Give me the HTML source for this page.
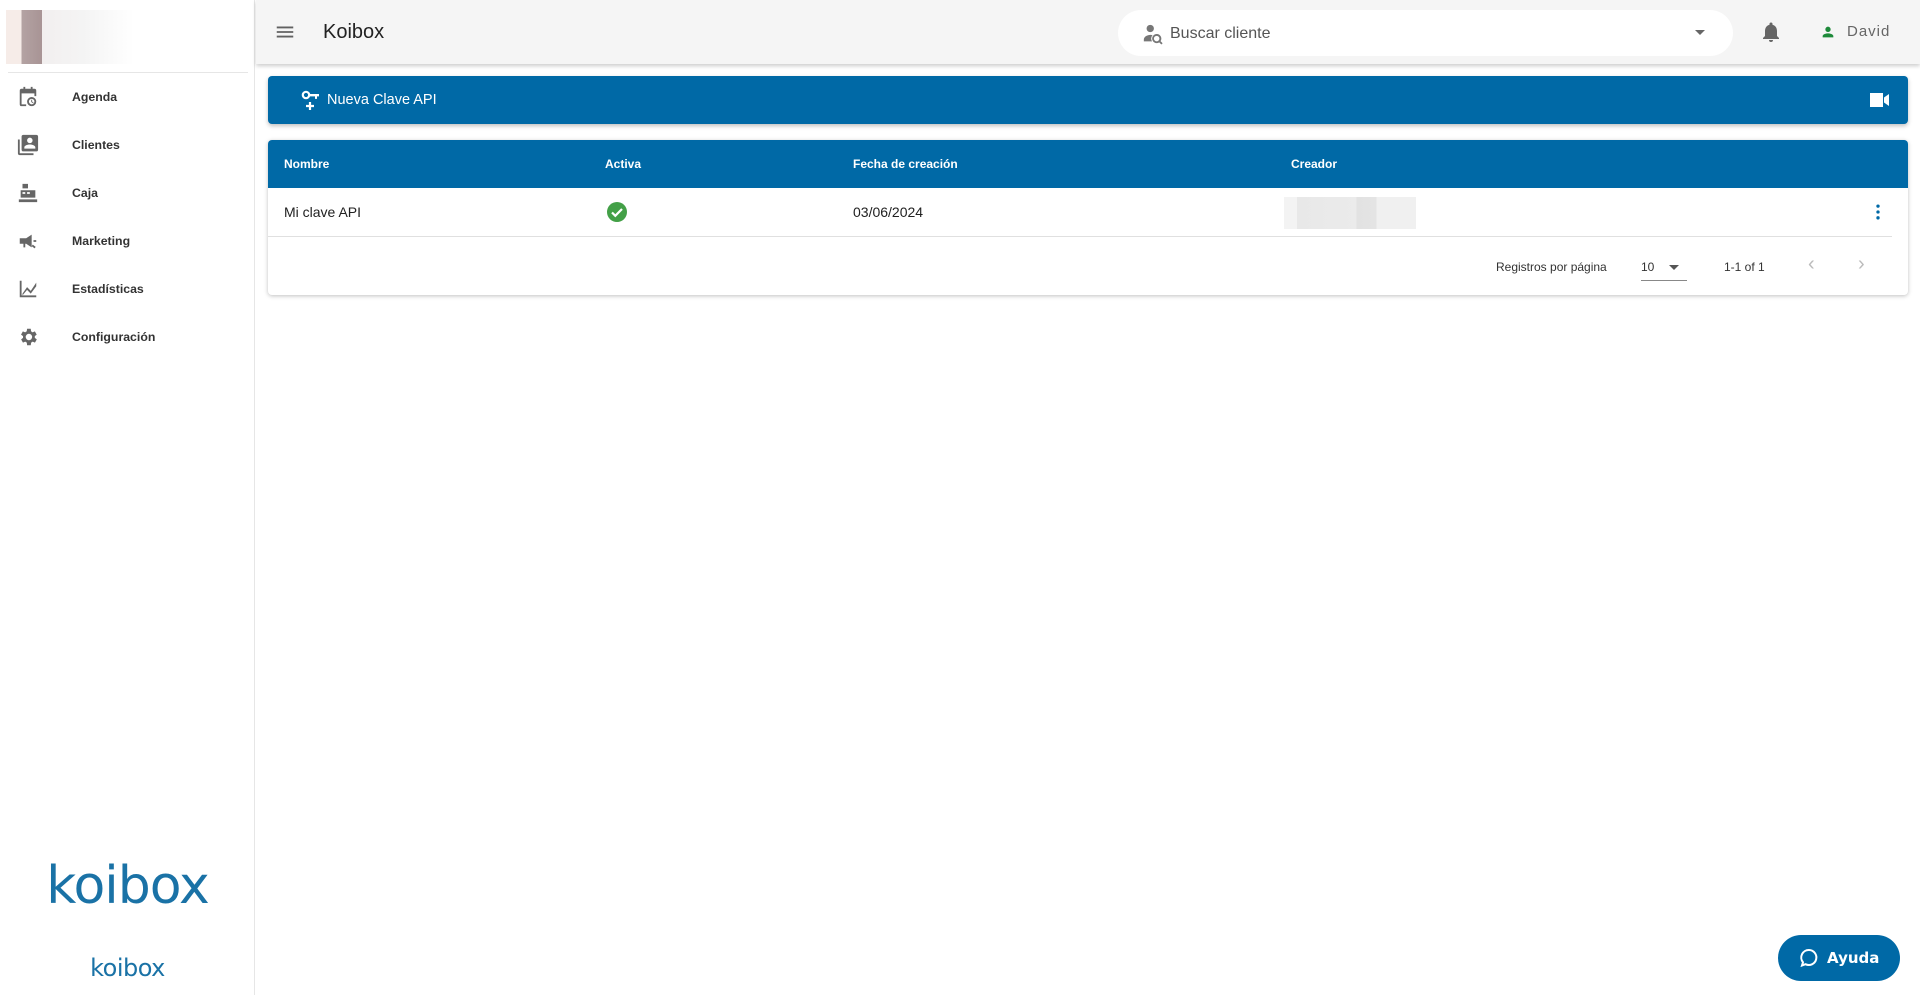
<!DOCTYPE html>
<html><head><meta charset="utf-8"><style>
*{box-sizing:border-box;margin:0;padding:0}
body{width:1920px;height:995px;overflow:hidden;background:#fff;font-family:"Liberation Sans",sans-serif;position:relative;color:#212121}
.side{position:absolute;left:0;top:0;width:255px;height:995px;background:#fff;border-right:1px solid #e6e6e6}
.av{position:absolute;left:6px;top:10px;width:128px;height:54px;background:linear-gradient(90deg,#f6ece8 0,#f6ece8 12%,#b4a3a3 12%,#a89495 28%,#f2efef 28%,#f4f4f4 60%,#fff 100%)}
.sep{position:absolute;left:8px;top:72px;width:240px;height:1px;background:#e6e6e6}
.item{position:absolute;left:0;height:40px;width:255px;display:flex;align-items:center;font-size:12.3px;font-weight:bold;color:#333}
.item svg{position:absolute;left:17px;width:22px;height:22px;fill:#666}
.item span{position:absolute;left:72px}
.top{position:absolute;left:256px;top:0;right:0;height:64px;background:#f5f5f5;box-shadow:0 2px 4px rgba(0,0,0,.2)}
.blue{background:#0069a6}
</style></head><body>
<div class="side">
<div class="av"></div><div class="sep"></div>
<div class="item" style="top:77px"><svg viewBox="0 0 24 24"><path d="M5 3h2V1h2v2h6V1h2v2h2a2 2 0 012 2v6h-2V8H5v12h5v2H5a2 2 0 01-2-2V5a2 2 0 012-2zm11 9a5 5 0 110 10 5 5 0 010-10zm0 2a3 3 0 100 6 3 3 0 000-6zm-.5 1h1v2l1.5 1-.5.8-2-1.3z"/></svg><span>Agenda</span></div>
<div class="item" style="top:125px"><svg viewBox="0 0 24 24"><path d="M3 6H1v15a2 2 0 002 2h15v-2H3zm18-5H7a2 2 0 00-2 2v14a2 2 0 002 2h14a2 2 0 002-2V3a2 2 0 00-2-2zm-7 3a3 3 0 110 6 3 3 0 010-6zm6 12H8v-1.5c0-2 4-3 6-3s6 1 6 3z"/></svg><span>Clientes</span></div>
<div class="item" style="top:173px"><svg viewBox="0 0 24 24"><path d="M6 2h6v5H6zM4 9h16v8H4zm2 2v2h3v-2zm5 0v2h3v-2zM2 19h20v3H2z"/></svg><span>Caja</span></div>
<div class="item" style="top:221px"><svg viewBox="0 0 24 24"><path d="M18 11v2h3v-2zm-2 6.6c1 .7 2.2 1.6 3.2 2.4l1.2-1.6c-1-.7-2.2-1.6-3.2-2.4zM3 9v6h4v4h2v-4h1l6 4V5l-6 4z"/></svg><span>Marketing</span></div>
<div class="item" style="top:269px"><svg viewBox="0 0 24 24"><path d="M3 3h2v16h16v2H3zm3 14l5-7 4 4 6-9v4l-6 8-4-4-5 6z"/></svg><span>Estadísticas</span></div>
<div class="item" style="top:317px"><svg viewBox="0 0 24 24"><path d="M19.4 13a7.5 7.5 0 000-2l2.1-1.6-2-3.5-2.5 1a7 7 0 00-1.7-1L15 3h-4l-.4 2.9a7 7 0 00-1.7 1l-2.5-1-2 3.5L6.6 11a7.5 7.5 0 000 2l-2.1 1.6 2 3.5 2.5-1a7 7 0 001.7 1L11 21h4l.4-2.9a7 7 0 001.7-1l2.5 1 2-3.5zM13 15.5a3.5 3.5 0 110-7 3.5 3.5 0 010 7z"/></svg><span>Configuración</span></div>
<div style="position:absolute;left:0;width:255px;top:856px;text-align:center;font-size:52px;color:#1a72a6;letter-spacing:-1px;font-family:'DejaVu Sans',sans-serif">koibox</div>
<div style="position:absolute;left:0;width:255px;top:954px;text-align:center;font-size:24px;color:#1a72a6;letter-spacing:-.5px;font-family:'DejaVu Sans',sans-serif">koibox</div>
</div>
<div class="top">
<svg style="position:absolute;left:18px;top:21px" width="22" height="22" viewBox="0 0 24 24"><path fill="#616161" d="M3 6h18v2H3zm0 5h18v2H3zm0 5h18v2H3z"/></svg>
<div style="position:absolute;left:67px;top:21px;font-size:20px;color:#222">Koibox</div>
<div style="position:absolute;left:862px;top:10px;width:615px;height:46px;background:#fff;border-radius:23px">
<svg style="position:absolute;left:24px;top:13px" width="22" height="22" viewBox="0 0 24 24"><path fill="#777" d="M9 2a4 4 0 110 8 4 4 0 010-8zM2 20v-2c0-3 4-5 7-5 1 0 2 .2 2.5.4A5 5 0 0011 20zm14-6a3 3 0 100 6 3 3 0 000-6zm0-2a5 5 0 014.2 7.8l2.3 2.3-1.4 1.4-2.3-2.3A5 5 0 1116 12z"/></svg>
<div style="position:absolute;left:52px;top:15px;font-size:16px;color:#555">Buscar cliente</div>
<div style="position:absolute;left:577px;top:20px;border-left:5px solid transparent;border-right:5px solid transparent;border-top:5px solid #666"></div>
</div>
<svg style="position:absolute;left:1503px;top:20px" width="24" height="24" viewBox="0 0 24 24"><path fill="#666" d="M12 22a2 2 0 002-2h-4a2 2 0 002 2zm6-6v-5c0-3-1.6-5.6-4.5-6.3V4a1.5 1.5 0 00-3 0v.7C7.6 5.4 6 8 6 11v5l-2 2v1h16v-1z"/></svg>
<svg style="position:absolute;left:1564px;top:24px" width="16" height="16" viewBox="0 0 24 24"><path fill="#1e8a3a" d="M12 12a4 4 0 100-8 4 4 0 000 8zm0 2c-2.7 0-8 1.3-8 4v2h16v-2c0-2.7-5.3-4-8-4z"/></svg>
<div style="position:absolute;left:1591px;top:23px;font-size:15px;color:#666;letter-spacing:1px">David</div>
</div>
<div class="blue" style="position:absolute;left:268px;top:76px;width:1640px;height:48px;border-radius:4px;box-shadow:0 2px 4px rgba(0,0,0,.25)">
<svg style="position:absolute;left:33px;top:14px" width="20" height="22" viewBox="0 0 20 22"><circle cx="5" cy="5" r="3.2" fill="none" stroke="#fff" stroke-width="2.2"/><path d="M8 4h10v2.4h-2v2.5h-2V6.4H8z" fill="#fff"/><path d="M9 12v8M5 16h8" stroke="#fff" stroke-width="2.2"/></svg>
<div style="position:absolute;left:59px;top:16px;font-size:14.5px;color:#fff">Nueva Clave API</div>
<svg style="position:absolute;left:1600px;top:14px" width="24" height="20" viewBox="0 0 24 20"><path fill="#fff" d="M2 3h13v14H2zm14 4.5L21 4v12l-5-3.5z"/></svg>
</div>
<div style="position:absolute;left:268px;top:140px;width:1640px;height:155px;background:#fff;border-radius:4px;box-shadow:0 1px 4px rgba(0,0,0,.25);overflow:hidden">
<div class="blue" style="height:48px;position:relative;color:#fff;font-size:12px;font-weight:bold">
<span style="position:absolute;left:16px;top:17px">Nombre</span>
<span style="position:absolute;left:337px;top:17px">Activa</span>
<span style="position:absolute;left:585px;top:17px">Fecha de creación</span>
<span style="position:absolute;left:1023px;top:17px">Creador</span>
</div>
<div style="height:49px;position:relative;border-bottom:1px solid #e0e0e0;margin-right:16px;font-size:14px">
<span style="position:absolute;left:16px;top:16px">Mi clave API</span>
<svg style="position:absolute;left:338px;top:13px" width="22" height="22" viewBox="0 0 22 22"><circle cx="11" cy="11" r="10" fill="#43a047"/><path d="M6 11.5l3.3 3.3L16 8" stroke="#fff" stroke-width="2.2" fill="none"/></svg>
<span style="position:absolute;left:585px;top:16px">03/06/2024</span>
<div style="position:absolute;left:1016px;top:9px;width:132px;height:32px;background:linear-gradient(90deg,#f3f3f3 0,#f3f3f3 10%,#e8e8e8 10%,#ebebeb 55%,#e2e2e2 55%,#e4e4e4 70%,#f0f0f0 70%)"></div>
<svg style="position:absolute;left:1600px;top:14px" width="20" height="20" viewBox="0 0 24 24"><circle cx="12" cy="5" r="2" fill="#0069a6"/><circle cx="12" cy="12" r="2" fill="#0069a6"/><circle cx="12" cy="19" r="2" fill="#0069a6"/></svg>
</div>
<div style="position:relative;height:58px;font-size:12px;color:#333">
<span style="position:absolute;left:1228px;top:23px">Registros por página</span>
<span style="position:absolute;left:1373px;top:23px">10</span>
<div style="position:absolute;left:1401px;top:28px;border-left:5px solid transparent;border-right:5px solid transparent;border-top:5px solid #555"></div>
<div style="position:absolute;left:1373px;top:43px;width:46px;height:1px;background:#888"></div>
<span style="position:absolute;left:1456px;top:23px">1-1 of 1</span>
<span style="position:absolute;left:1540px;top:16px;font-size:20px;color:#bbb">‹</span>
<span style="position:absolute;left:1590px;top:16px;font-size:20px;color:#bbb">›</span>
</div>
</div>
<div class="blue" style="position:absolute;left:1778px;top:935px;width:122px;height:46px;border-radius:23px;color:#fff;font-family:'DejaVu Sans',sans-serif;font-weight:bold;font-size:15px">
<svg style="position:absolute;left:21px;top:13px" width="20" height="20" viewBox="0 0 20 20"><path d="M10 2a7.5 7.5 0 11-3.5 14.2L3 17.5l1-3.2A7.5 7.5 0 0110 2z" fill="none" stroke="#fff" stroke-width="2"/></svg>
<span style="position:absolute;left:49px;top:14px">Ayuda</span>
</div>
</body></html>
